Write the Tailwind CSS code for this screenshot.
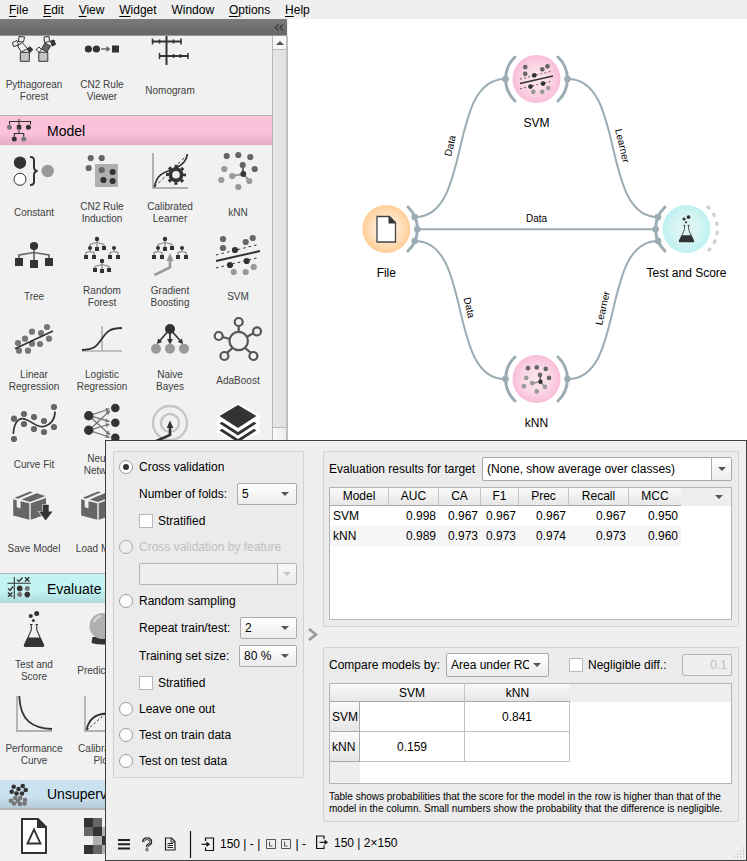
<!DOCTYPE html>
<html lang="en">
<head>
<meta charset="utf-8">
<title>Workflow editor</title>
<script src="https://cdn.jsdelivr.net/npm/@tailwindcss/browser@4"></script>
</head>
<body class="relative w-[747px] h-[861px] overflow-hidden flex flex-col bg-[#efefef] font-['Liberation_Sans',Arial,sans-serif] text-[12px] leading-[14px] text-black">

<!-- shared icon shapes -->
<svg class="hidden">
  <defs>
    <g id="svm">
      <g fill="#666"><circle cx="223" cy="239" r="3.1"/><circle cx="223" cy="248" r="3.1"/><circle cx="245.7" cy="242" r="3.1"/><circle cx="252.7" cy="238" r="3.1"/></g>
      <g fill="#999"><circle cx="233.7" cy="272" r="3.1"/><circle cx="245.7" cy="272" r="3.1"/><circle cx="253.7" cy="267" r="3.1"/></g>
      <g stroke="#333" fill="none"><path d="M216 261L260 251" stroke-width="2"/><path d="M216 255L259 244.3M216 268L259 257.5" stroke-width="1" stroke-dasharray="2.6 3"/></g>
      <g fill="#333"><circle cx="235" cy="250" r="3.1"/><circle cx="230" cy="265" r="3.1"/><circle cx="246.7" cy="261" r="3.1"/></g>
    </g>
    <g id="knn">
      <path d="M243.3 174L242.7 165" stroke="#666" stroke-width="2"/><path d="M243.3 174L232.3 176M243.3 174L249.3 181" stroke="#999" stroke-width="2"/>
      <g fill="#666"><circle cx="226.7" cy="156" r="3.1"/><circle cx="238.3" cy="155" r="3.1"/><circle cx="250.3" cy="157" r="3.1"/><circle cx="254.7" cy="169" r="3.1"/><circle cx="242.7" cy="165" r="3.1"/></g>
      <g fill="#999"><circle cx="224.3" cy="169" r="3.1"/><circle cx="221.3" cy="180" r="3.1"/><circle cx="232.3" cy="176" r="3.1"/><circle cx="249.3" cy="181" r="3.1"/><circle cx="238.3" cy="187" r="3.1"/></g>
      <circle cx="243.3" cy="174" r="2.9" fill="#333"/>
    </g>
    <g id="flask">
      <g fill="#333"><circle cx="30.7" cy="616" r="2.1"/><circle cx="36.7" cy="613.4" r="2.5"/><circle cx="33.4" cy="620.4" r="1.5"/>
      <path d="M27.5 637.5H40.500L44 644.500Q45 647 42 647H26Q23 647 24 644.500Z"/></g>
      <path d="M31.3 624.500V630L25 644.500M36.800 624.500V630L43 644.500" fill="none" stroke="#333" stroke-width="1.1"/>
      <path d="M30 624.500H32.500M35.500 624.500H38" stroke="#333" stroke-width="1.200"/>
    </g>
    <g id="forest">
      <path d="M97 240V247M90 247V244.500L97 242.500L104 244.500V247M90 249V251.500M86 255V252.500L90 251.500L94 252.500V255M114 249V251.500M110 255V252.500L114 251.500L118 252.500V255" fill="none" stroke="#888" stroke-width="1.200"/>
      <g fill="#333"><circle cx="97" cy="239" r="2.200"/><circle cx="90" cy="248" r="2"/><circle cx="114" cy="248" r="2"/><path d="M95 247h4v4h-4zM102 246h4v4h-4zM84 255h4v4h-4zM92 255h4v4h-4zM108 255h4v4h-4zM116 255h4v4h-4z"/></g>
    </g>
    <g id="box">
      <path d="M13.200 499.300L16.700 500.200V507L20.500 508.500V501.200L29.300 503.300V519.800L13.200 515.500ZM30.700 503.300L46 498V514.500L30.700 519.800Z" fill="#666"/>
      <path d="M14.500 497.800L30 491.500L33 492.200L18 498.700ZM21.500 499.600L36.500 493.200L45.500 496L30 502Z" fill="#666"/>
      <path d="M22 498.300L36 492.700" stroke="#f1f1f1" stroke-width=".8"/>
    </g>
  </defs>
</svg>

<!-- menu bar -->
<nav class="h-[19px] shrink-0 flex items-center gap-[14.8px] pl-[9px]">
  <span><u class="underline-offset-2">F</u>ile</span><span><u class="underline-offset-2">E</u>dit</span><span><u class="underline-offset-2">V</u>iew</span><span><u class="underline-offset-2">W</u>idget</span><span>Window</span><span><u class="underline-offset-2">O</u>ptions</span><span><u class="underline-offset-2">H</u>elp</span>
</nav>

<div class="flex h-[842px]">
  <!-- toolbox -->
  <aside class="w-[288px] shrink-0 flex flex-col">
    <div class="h-[17px] w-[287px] bg-linear-to-b from-[#7b7b7b] to-[#666] border-b border-[#999] flex justify-end items-center pr-[3px]">
      <svg class="w-[10px] h-[7px]" viewBox="0 0 10 7" fill="none" stroke="#3a3a3a" stroke-width="1.100"><path d="M4.500 .5L1.300 3.500L4.500 6.500M9 .5L5.800 3.500L9 6.500"/></svg>
    </div>
    <div class="flex flex-1 min-h-0">
      <div class="w-[272px] bg-[#f1f1f1] overflow-hidden text-[10px] leading-[12px] text-[#404040] text-center">
        <div class="grid grid-cols-4 h-[79px] content-start">
          <div><svg class="w-[68px] h-[39px]" viewBox="0 36 68 39">
            <g stroke="#333" stroke-width="1" fill="#f1f1f1"><path d="M20.300 52.300h9v9h-9z" fill="#c4c4c4"/><path d="M17.500 46L22 42.500L27.500 48.500L21.500 52Z"/><path d="M12.500 42.500L17 40.500L18.500 45L13.500 46.500ZM19 36.500L24.500 37L23.500 42L18.500 41.500Z"/><path d="M27 49L30 46.800L32.800 49.500L30 52.500Z" fill="#333"/>
            <path d="M38.800 52.300h9v9h-9z" fill="#c4c4c4"/><path d="M41.500 49L45 43L50.500 46L47 52Z" fill="#666"/><path d="M36 49.500L39 47L41.500 49.500L39 52.500Z"/><path d="M44 37L49 36.500L49.500 41.500L44.500 42.500Z"/><path d="M50.500 41L54 40L55.500 44.500L52 46Z" fill="#333"/></g></svg>
            <p class="h-[32px] flex items-center justify-center">Pythagorean<br>Forest</p></div>
          <div><svg class="w-[68px] h-[39px]" viewBox="68 36 68 39"><g fill="#333"><circle cx="88.400" cy="49" r="3.600"/><circle cx="96.400" cy="49" r="3.600"/><path d="M112 45.500h7v7h-7z"/></g><path d="M101 49H107.500" stroke="#666" stroke-width="1.500"/><path d="M106.500 46L110.500 49L106.500 52Z" fill="#666"/></svg>
            <p class="h-[32px] flex items-center justify-center">CN2 Rule<br>Viewer</p></div>
          <div><svg class="w-[68px] h-[39px]" viewBox="136 36 68 39"><path d="M166.500 36V65M152 41.500H181.500M159 56H188.500" stroke="#333" stroke-width="2"/><path d="M152.500 38.500v6M159.500 39.500v4M173.500 39.500v4M181 38.500v6M159.500 53v6M173.500 54v4M180.500 54v4M188 53v6" stroke="#333" stroke-width="1.500"/></svg>
            <p class="h-[32px] flex items-center justify-center">Nomogram</p></div>
        </div>

        <h2 class="h-[30px] flex items-center border-t border-[#b5b5b5] bg-linear-to-b from-[#fbc2da] from-60% to-[#e2abc2] text-[14px] text-black">
          <svg class="w-[47px] h-[29px]" viewBox="0 116 47 29"><path d="M9.500 124.500V121.500H30.500V124.500M19 119V125M19 130V133.500M14.300 136.500V133.500H23.700V136.500" fill="none" stroke="#333" stroke-width="1.100"/><g fill="#333"><path d="M16.800 125h4.500v4.500h-4.500z"/><circle cx="28.400" cy="127.300" r="2.500"/><circle cx="14.300" cy="139" r="2.500"/></g><g fill="#777"><circle cx="9.500" cy="127.300" r="2.500"/><circle cx="23.700" cy="139" r="2.500"/></g></svg>
          <span>Model</span></h2>
        <div class="grid grid-cols-4 auto-rows-[84px] pb-[8px]">
          <div><svg class="w-[68px] h-[52px]" viewBox="0 145 68 52"><circle cx="20" cy="162.700" r="6.200" fill="#333"/><circle cx="20" cy="179.300" r="6" fill="#fff" stroke="#333"/><path d="M30 157Q34.500 157 34 161V167Q34 170.500 37.500 171Q34 171.500 34 175V181Q34.500 185 30 185" fill="none" stroke="#333" stroke-width="2"/><circle cx="47.700" cy="171" r="6.200" fill="#999"/></svg>
            <p class="h-[32px] flex items-center justify-center">Constant</p></div>
          <div><svg class="w-[68px] h-[52px]" viewBox="68 145 68 52"><path d="M95 164h23v23h-23z" fill="#b0b0b0"/><g fill="#666"><circle cx="90.700" cy="158" r="3.100"/><circle cx="101.700" cy="158" r="3.100"/><circle cx="88.700" cy="168" r="3.100"/><circle cx="101.700" cy="170" r="3.100"/></g><g fill="#333"><circle cx="112.700" cy="172" r="3.100"/><circle cx="103.400" cy="180" r="3.100"/><circle cx="112.700" cy="181" r="3.100"/></g></svg>
            <p class="h-[32px] flex items-center justify-center">CN2 Rule<br>Induction</p></div>
          <div><svg class="w-[68px] h-[52px]" viewBox="136 145 68 52"><path d="M153 153V188H188" fill="none" stroke="#b0b0b0" stroke-width="2"/><path d="M154.500 187L186 156" stroke="#333" stroke-dasharray="3 2.500"/><path d="M154.500 187C157 172 167 172 174 169C183 165 187 159 187.300 154" fill="none" stroke="#333" stroke-width="1.700"/><circle cx="176" cy="174.700" r="5.600" fill="#f1f1f1" stroke="#333" stroke-width="3.600"/><circle cx="176" cy="174.700" r="8.500" fill="none" stroke="#333" stroke-width="3" stroke-dasharray="3 3.675" stroke-dashoffset="1.500"/></svg>
            <p class="h-[32px] flex items-center justify-center">Calibrated<br>Learner</p></div>
          <div><svg class="w-[68px] h-[52px]" viewBox="204 145 68 52"><use href="#knn"/></svg>
            <p class="h-[32px] flex items-center justify-center">kNN</p></div>

          <div><svg class="w-[68px] h-[52px]" viewBox="0 229 68 52"><path d="M34 248V262M19 259V255L34 252.500L49 255V259" fill="none" stroke="#666" stroke-width="1.700"/><g fill="#333"><circle cx="34" cy="246" r="4.100"/><path d="M15 258h8v8h-8zM30 260h8v8h-8zM45 258h8v8h-8z"/></g></svg>
            <p class="h-[32px] flex items-center justify-center">Tree</p></div>
          <div><svg class="w-[68px] h-[52px]" viewBox="68 229 68 52"><use href="#forest"/><path d="M102 262V270M95 269V266.500L102 264.500L109 266.500V269" fill="none" stroke="#888" stroke-width="1.200"/><g fill="#333"><circle cx="102" cy="261" r="2.200"/><path d="M93 268h4v4h-4zM100 269h4v4h-4zM107 268h4v4h-4z"/></g></svg>
            <p class="h-[32px] flex items-center justify-center">Random<br>Forest</p></div>
          <div><svg class="w-[68px] h-[52px]" viewBox="136 229 68 52"><use href="#forest" x="68"/><path d="M154.500 275L170 267.500V258" fill="none" stroke="#999" stroke-width="2.600"/><path d="M166.500 261L170 253L173.500 261Z" fill="#999"/></svg>
            <p class="h-[32px] flex items-center justify-center">Gradient<br>Boosting</p></div>
          <div><svg class="w-[68px] h-[52px]" viewBox="204 229 68 52"><use href="#svm"/></svg>
            <p class="h-[32px] flex items-center justify-center">SVM</p></div>

          <div><svg class="w-[68px] h-[52px]" viewBox="0 313 68 52"><g fill="#777"><circle cx="19" cy="350.700" r="3.100"/><circle cx="18" cy="343" r="3.100"/><circle cx="25" cy="338.700" r="3.100"/><circle cx="32" cy="331.700" r="3.100"/><circle cx="41" cy="333" r="3.100"/><circle cx="47" cy="327" r="3.100"/><circle cx="49" cy="338.700" r="3.100"/><circle cx="40" cy="344" r="3.100"/><circle cx="32" cy="343.700" r="3.100"/><circle cx="28" cy="350.700" r="3.100"/></g><path d="M15 348.700L53 331" stroke="#333" stroke-width="1.700"/></svg>
            <p class="h-[32px] flex items-center justify-center">Linear<br>Regression</p></div>
          <div><svg class="w-[68px] h-[52px]" viewBox="68 313 68 52"><path d="M102 326V351M82 351H122" stroke="#b0b0b0" stroke-width="1.700"/><path d="M82 350C96 350 98 344 102 338.500S108 328 122 328" fill="none" stroke="#333" stroke-width="1.800"/></svg>
            <p class="h-[32px] flex items-center justify-center">Logistic<br>Regression</p></div>
          <div><svg class="w-[68px] h-[52px]" viewBox="136 313 68 52"><path d="M170 329L159.500 341M170 329V340M170 329L180.500 341" stroke="#333" stroke-width="1.700"/><circle cx="170" cy="329" r="5" fill="#333"/><path d="M157 344L158 338.500L162.300 342ZM167 339h6L170 344.500ZM183 344L182 338.500L177.700 342Z" fill="#333"/><g fill="#999"><circle cx="156" cy="348.800" r="5"/><circle cx="170" cy="348.800" r="5"/><circle cx="184" cy="348.800" r="5"/></g></svg>
            <p class="h-[32px] flex items-center justify-center">Naive<br>Bayes</p></div>
          <div><svg class="w-[68px] h-[52px]" viewBox="204 313 68 52"><g fill="none" stroke="#555" stroke-width="2.200"><circle cx="238.700" cy="341" r="9.200"/><circle cx="238.700" cy="322" r="4"/><circle cx="257" cy="331.400" r="4"/><circle cx="253.400" cy="356" r="4"/><circle cx="224.400" cy="356" r="4"/><circle cx="218.700" cy="336" r="4"/><path d="M238.700 326V332M253.500 333.200L247 336.700M251 352.800L245 348M227 352.800L232.500 348M222.500 337L230 339"/></g></svg>
            <p class="h-[32px] flex items-center justify-center">AdaBoost</p></div>

          <div><svg class="w-[68px] h-[52px]" viewBox="0 397 68 52"><g fill="#666"><circle cx="14" cy="418.700" r="3.100"/><circle cx="24" cy="414" r="3.100"/><circle cx="24" cy="424" r="3.100"/><circle cx="34" cy="417" r="3.100"/><circle cx="34" cy="429" r="3.100"/><circle cx="44" cy="421" r="3.100"/><circle cx="44" cy="432" r="3.100"/><circle cx="54" cy="407" r="3.100"/><circle cx="54" cy="427" r="3.100"/><circle cx="14" cy="439" r="3.100"/></g><path d="M13.300 434C14 420 20 417 26 419.500C33 422 37 428 44 426.500C52 424 55 419 55 411.500" fill="none" stroke="#333" stroke-width="1.700"/></svg>
            <p class="h-[32px] flex items-center justify-center">Curve Fit</p></div>
          <div><svg class="w-[68px] h-[52px]" viewBox="68 397 68 52"><path d="M89 415.700L108 409.500M89 415.700L108 421M89 415.700L109 434M89 430.300L109 411.500M89 430.300L108 424.500M89 430.300L109 437" stroke="#777" stroke-width="1.300"/><path d="M110 408.500L105.500 408L106.500 412ZM110.500 421.700L106 418.500L105.500 422.500ZM110.500 435.500L108.500 430.500L105.500 433.500ZM110.500 410L105.500 412L108.500 415ZM110 424L105.500 423.300L106.500 427.200ZM110.500 437.500L106 434.300L105.500 438Z" fill="#777"/><g fill="#333"><circle cx="88.700" cy="415.700" r="4.700"/><circle cx="88.700" cy="430.300" r="4.700"/><circle cx="115.300" cy="408" r="4.300"/><circle cx="115.300" cy="422.700" r="4.300"/><circle cx="115.300" cy="437.700" r="4.300"/></g></svg>
            <p class="h-[32px] flex items-center justify-center">Neural<br>Network</p></div>
          <div><svg class="w-[68px] h-[52px]" viewBox="136 397 68 52"><g fill="none" stroke="#c6c6c6" stroke-width="2.400"><circle cx="170" cy="423" r="17"/><circle cx="170" cy="423" r="9"/></g><path d="M154 442L170 435V426" fill="none" stroke="#333" stroke-width="2.600"/><path d="M166.700 428L170 420.500L173.300 428Z" fill="#333"/></svg>
            <p class="h-[32px] flex items-center justify-center">Stochastic</p></div>
          <div><svg class="w-[68px] h-[52px]" viewBox="204 397 68 52"><path d="M238 402.500L261 416.500L258 420L261 423L258 427L261 431L238 445L215.500 431L218.500 427L215.500 423L218.500 420L215.500 416.500Z" fill="#fff"/><g fill="#333"><path d="M238 405L256.500 416L238 428L219.500 416Z"/><path d="M219.500 423.500L222 421.700L238 432L254 421.700L256.500 423.500L238 435.500Z"/><path d="M219.500 430.500L222 428.700L238 439L254 428.700L256.500 430.500L238 442.500Z"/></g></svg>
            <p class="h-[32px] flex items-center justify-center">Stacking</p></div>

          <div><svg class="w-[68px] h-[52px]" viewBox="0 481 68 52"><use href="#box"/><path d="M42.700 504.800H48.700V511.500H52.500L45.700 520.500L39 511.500H42.700Z" fill="#333" stroke="#f1f1f1" stroke-width="1.200" paint-order="stroke"/></svg>
            <p class="h-[32px] flex items-center justify-center">Save Model</p></div>
          <div><svg class="w-[68px] h-[52px]" viewBox="68 481 68 52"><use href="#box" x="68"/></svg>
            <p class="h-[32px] flex items-center justify-center">Load Model</p></div>
        </div>

        <h2 class="h-[30px] flex items-center border-t border-[#b5b5b5] bg-linear-to-b from-[#c3f3f3] from-60% to-[#aedada] text-[14px] text-black">
          <svg class="w-[47px] h-[29px]" viewBox="0 574 47 29"><path d="M14.300 577V599M7.500 583.300H30.700" stroke="#333" stroke-width="1.100"/><path d="M17 579.500L19 581.500L22.500 577.500M25 577.300L29.300 581.600M29.300 577.300L25 581.600M8 588.500L10 590.500L13 586.500M8 592.500L12.300 596.800M12.300 592.500L8 596.800" fill="none" stroke="#333" stroke-width="1.400"/><g fill="#333"><circle cx="19.700" cy="588.400" r="2.800"/><circle cx="27.300" cy="594.600" r="2.800"/></g><g fill="#777"><circle cx="27.300" cy="588.400" r="2.500"/><circle cx="19.700" cy="594.600" r="2.500"/></g></svg>
          <span>Evaluate</span></h2>
        <div class="grid grid-cols-4 auto-rows-[84px] pb-[9px]">
          <div><svg class="w-[68px] h-[52px]" viewBox="0 603 68 52"><use href="#flask"/></svg>
            <p class="h-[32px] flex items-center justify-center">Test and<br>Score</p></div>
          <div><svg class="w-[68px] h-[52px]" viewBox="68 603 68 52"><path d="M92.500 637H112.500L113.500 643Q103 646 91.500 643Z" fill="#333"/><circle cx="102.500" cy="626" r="13" fill="#b0b0b0"/><path d="M94 622Q96 617 101 616" fill="none" stroke="#d8d8d8" stroke-width="2"/></svg>
            <p class="h-[32px] flex items-center justify-center">Predictions</p></div>
          <div class="col-start-1"><svg class="w-[68px] h-[52px]" viewBox="0 687 68 52"><path d="M17 696V731H52" fill="none" stroke="#b0b0b0" stroke-width="1.800"/><path d="M19.300 696C20 721 33 728.500 52 729" fill="none" stroke="#333" stroke-width="1.800"/></svg>
            <p class="h-[32px] flex items-center justify-center">Performance<br>Curve</p></div>
          <div><svg class="w-[68px] h-[52px]" viewBox="68 687 68 52"><path d="M85 696V731H120" fill="none" stroke="#b0b0b0" stroke-width="1.800"/><path d="M86.500 730C89 718 96 714 106 713.500" fill="none" stroke="#333" stroke-width="1.800"/><path d="M87 730L105 714" stroke="#333" stroke-dasharray="2.500 2"/></svg>
            <p class="h-[32px] flex items-center justify-center">Calibration<br>Plot</p></div>
        </div>

        <h2 class="h-[30px] flex items-center border-b-2 border-[#b5b5b5] bg-linear-to-b from-[#cae1ef] from-60% to-[#b5cad6] text-[14px] text-black">
          <svg class="w-[47px] h-[28px]" viewBox="0 780 47 28"><g fill="#333"><circle cx="13.700" cy="786.700" r="2.300"/><circle cx="22.700" cy="786" r="2.300"/><circle cx="18.500" cy="789" r="2.300"/><circle cx="11.700" cy="791.700" r="2.300"/><circle cx="25.700" cy="790" r="2.300"/><circle cx="16.500" cy="793.500" r="2.300"/><circle cx="22" cy="793.500" r="2.300"/></g><g fill="#777"><circle cx="11" cy="800.700" r="2.300"/><circle cx="15.300" cy="798" r="2.300"/><circle cx="20.200" cy="798" r="2.300"/><circle cx="14" cy="803.500" r="2.300"/><circle cx="18" cy="801" r="2.300"/><circle cx="25" cy="800" r="2.300"/><circle cx="20" cy="804" r="2.300"/><circle cx="24.500" cy="803.500" r="2.300"/></g></svg>
          <span>Unsupervised</span></h2>
        <div class="grid grid-cols-4">
          <svg class="w-[68px] h-[51px]" viewBox="0 810 68 51"><path d="M22 819H38L46 827V853H22Z" fill="#fff" stroke="#333" stroke-width="2"/><path d="M37 818.500L47 828H37Z" fill="#333"/><path d="M27.500 843.500L34 829.500L40.500 843.500Z" fill="none" stroke="#333" stroke-width="1.800"/></svg>
          <svg class="w-[68px] h-[51px]" viewBox="68 810 68 51"><path d="M84 818h9v9h-9zM93 827h9v9h-9zM102 836h9v9h-9zM84 845h9v9h-9z" fill="#333"/><path d="M93 818h9v9h-9zM84 827h9v9h-9zM93 845h9v9h-9z" fill="#666"/><path d="M102 827h9v9h-9zM93 836h9v9h-9zM102 845h9v9h-9z" fill="#b0b0b0"/></svg>
        </div>
      </div>
      <!-- toolbox scroll bar -->
      <div class="w-[16px] flex flex-col border-l border-[#b4b8ba] border-r-2 border-r-[#b9c0c4] bg-[#e4e4e4]">
        <div class="h-[14px] bg-[#f8f8f8] border-b border-[#bbb] flex items-center justify-center"><svg class="w-[8px] h-[4px]" viewBox="0 0 8 4"><path d="M0 4L4 0L8 4Z" fill="#555"/></svg></div>
        <div class="h-[377px]"></div>
        <div class="flex-1 border-t border-[#bbb] bg-linear-to-r from-[#f9f9f9] to-[#ececec]"></div>
      </div>
    </div>
  </aside>

  <!-- workflow canvas -->
  <main class="flex-1 bg-white">
    <svg class="w-[459px] h-[842px] font-['Liberation_Sans',Arial,sans-serif]" viewBox="288 19 459 842">
      <defs>
        <radialGradient id="gp"><stop offset="0" stop-color="#fbe6ee"/><stop offset=".5" stop-color="#fbdbe8"/><stop offset="1" stop-color="#f9bdd8"/></radialGradient>
        <radialGradient id="go"><stop offset="0" stop-color="#fff0de"/><stop offset=".5" stop-color="#ffe6ca"/><stop offset="1" stop-color="#ffce96"/></radialGradient>
        <radialGradient id="gt"><stop offset="0" stop-color="#e2f5f4"/><stop offset=".5" stop-color="#d8f4f3"/><stop offset="1" stop-color="#bff1f1"/></radialGradient>
      </defs>
      <g fill="none" stroke="#9cacb4" stroke-width="2">
        <path d="M415 217C473 217 447 79 505 79M415 241C473 241 447 379 505 379M568 79C626 79 600 217 658 217M568 379C626 379 600 241 658 241"/>
        <path d="M417 229.300H656"/>
      </g>
      <g fill="none" stroke="#9cacb4" stroke-width="3" stroke-linecap="round">
        <path d="M515 57A30.500 30.500 0 0 0 515 101M558 57A30.500 30.500 0 0 1 558 101M515 357A30.500 30.500 0 0 0 515 401M558 357A30.500 30.500 0 0 1 558 401M408 207A30.500 30.500 0 0 1 408 251M665 207A30.500 30.500 0 0 0 665 251"/>
        <path d="M708 207A30.500 30.500 0 0 1 708 251" stroke="#c8d0d4" stroke-width="3.200" stroke-dasharray="1.500 7.700"/>
      </g>
      <g fill="#9cacb4"><circle cx="505.500" cy="79" r="3.300"/><circle cx="567.500" cy="79" r="3.300"/><circle cx="505.500" cy="379" r="3.300"/><circle cx="567.500" cy="379" r="3.300"/><circle cx="414.700" cy="217" r="3.300"/><circle cx="417.300" cy="229.300" r="3.300"/><circle cx="414.700" cy="241" r="3.300"/><circle cx="658" cy="217" r="3.300"/><circle cx="655.600" cy="229.300" r="3.300"/><circle cx="658" cy="241" r="3.300"/></g>
      <circle cx="536.500" cy="79" r="24" fill="url(#gp)"/><circle cx="536.500" cy="379" r="24" fill="url(#gp)"/><circle cx="386.300" cy="229" r="24" fill="url(#go)"/><circle cx="686.500" cy="229" r="24" fill="url(#gt)"/>
      <use href="#svm" transform="translate(358 -112.200) scale(.75)"/>
      <use href="#knn" transform="translate(358 251.200) scale(.75)"/>
      <use href="#flask" transform="translate(661 -243) scale(.75)"/>
      <path d="M377 216.500H389.500L395.500 222.500V242H377Z" fill="#fff" stroke="#444" stroke-width="1.300"/><path d="M388.500 216L396 223.500H388.500Z" fill="#333"/>
      <g font-size="12" text-anchor="middle"><text x="536.500" y="127">SVM</text><text x="536.500" y="427">kNN</text><text x="386.300" y="277">File</text><text x="686.500" y="277">Test and Score</text></g>
      <g font-size="10" text-anchor="middle"><text x="536.500" y="222">Data</text><text transform="translate(453.500 146.500) rotate(-77)">Data</text><text transform="translate(466 308.500) rotate(77)">Data</text><text transform="translate(619 146.500) rotate(77)">Learner</text><text transform="translate(606 309) rotate(-77)">Learner</text></g>
    </svg>
  </main>
</div>

<!-- Test and Score window -->
<section class="absolute left-[105px] top-[440px] w-[642px] h-[421px] bg-[#efefef] border border-[#404040] flex flex-col">
  <div class="flex h-[382px] pt-[10px] pl-[7px]">
    <div class="w-[191px] h-[327px] border border-[#d2d2d2] rounded-[2px] bg-[#ebebeb] pt-[2px] pl-[5px] pr-[6px]">
      <div class="h-[26px] flex items-center gap-[6px]"><i class="size-[14px] rounded-full border border-[#999] bg-white flex items-center justify-center"><b class="size-[6px] rounded-full bg-[#333]"></b></i>Cross validation</div>
      <div class="h-[28px] flex items-center justify-between pl-[20px]">Number of folds:
        <div class="w-[60px] h-[22px] border border-[#aaa] rounded-[2px] bg-linear-to-b from-white to-[#ececec] flex items-center justify-between pl-[4px] pr-[7px]">5<svg class="w-[8px] h-[4px]" viewBox="0 0 8 4"><path d="M0 0H8L4 4Z" fill="#555"/></svg></div></div>
      <div class="h-[26px] flex items-center gap-[5px] pl-[20px]"><i class="size-[14px] border border-[#b8b8b8] bg-white"></i>Stratified</div>
      <div class="h-[26px] flex items-center gap-[6px] text-[#bebebe]"><i class="size-[14px] rounded-full border border-[#aaa] bg-[#efefef]"></i>Cross validation by feature</div>
      <div class="h-[28px] flex items-center pl-[20px]">
        <div class="w-[158px] h-[22px] border border-[#b4b4b4] rounded-[2px] bg-[#efefef] flex justify-end"><div class="w-[19px] border-l border-[#b4b4b4] bg-linear-to-b from-[#f8f8f8] to-[#ececec] flex items-center justify-center"><svg class="w-[8px] h-[4px]" viewBox="0 0 8 4"><path d="M0 0H8L4 4Z" fill="#c4c4c4"/></svg></div></div></div>
      <div class="h-[26px] flex items-center gap-[6px]"><i class="size-[14px] rounded-full border border-[#999] bg-white"></i>Random sampling</div>
      <div class="h-[28px] flex items-center justify-between pl-[20px]">Repeat train/test:
        <div class="w-[57px] h-[22px] border border-[#aaa] rounded-[2px] bg-linear-to-b from-white to-[#ececec] flex items-center justify-between pl-[4px] pr-[7px]">2<svg class="w-[8px] h-[4px]" viewBox="0 0 8 4"><path d="M0 0H8L4 4Z" fill="#555"/></svg></div></div>
      <div class="h-[28px] flex items-center justify-between pl-[20px]">Training set size:
        <div class="w-[58px] h-[22px] border border-[#aaa] rounded-[2px] bg-linear-to-b from-white to-[#ececec] flex items-center justify-between pl-[4px] pr-[7px]">80 %<svg class="w-[8px] h-[4px]" viewBox="0 0 8 4"><path d="M0 0H8L4 4Z" fill="#555"/></svg></div></div>
      <div class="h-[26px] flex items-center gap-[5px] pl-[20px]"><i class="size-[14px] border border-[#b8b8b8] bg-white"></i>Stratified</div>
      <div class="h-[26px] flex items-center gap-[6px]"><i class="size-[14px] rounded-full border border-[#999] bg-white"></i>Leave one out</div>
      <div class="h-[26px] flex items-center gap-[6px]"><i class="size-[14px] rounded-full border border-[#999] bg-white"></i>Test on train data</div>
      <div class="h-[26px] flex items-center gap-[6px]"><i class="size-[14px] rounded-full border border-[#999] bg-white"></i>Test on test data</div>
    </div>

    <div class="w-[19px] pt-[177px] pl-[4px]"><svg class="w-[10px] h-[13px]" viewBox="0 0 10 13"><path d="M1 1L8 6.500L1 12" fill="none" stroke="#999" stroke-width="2.600"/></svg></div>

    <div class="w-[416px] flex flex-col gap-[20px]">
      <div class="h-[176px] border border-[#d2d2d2] rounded-[2px] bg-[#ebebeb] px-[5px] pt-[5px]">
        <div class="flex items-center justify-between h-[24px] pr-px">Evaluation results for target
          <div class="w-[250px] h-[24px] border border-[#aaa] rounded-[2px] bg-white flex items-center justify-between pl-[4px]">(None, show average over classes)<div class="w-[20px] h-full border-l border-[#aaa] bg-linear-to-b from-white to-[#ececec] flex items-center justify-center"><svg class="w-[8px] h-[4px]" viewBox="0 0 8 4"><path d="M0 0H8L4 4Z" fill="#555"/></svg></div></div></div>
        <div class="mt-[6px] w-[403px] h-[133px] border border-[#b4b4b4] bg-white">
          <div class="h-[18px] flex bg-[#eee]">
            <div class="grid grid-cols-[59px_50px_42px_38px_50px_60px_52px] text-center leading-[17px] border-b border-[#aaa] bg-linear-to-b from-[#fafafa] to-[#e6e6e6] divide-x divide-[#c6c6c6]">
              <span>Model</span><span>AUC</span><span>CA</span><span>F1</span><span>Prec</span><span>Recall</span><span>MCC</span></div>
            <div class="flex-1 flex items-center justify-end pr-[8px]"><svg class="w-[8px] h-[4px]" viewBox="0 0 8 4"><path d="M0 0H8L4 4Z" fill="#555"/></svg></div>
          </div>
          <div class="w-[351px] h-[20px] grid grid-cols-[59px_50px_42px_38px_50px_60px_52px] leading-[20px] text-right"><span class="text-left pl-[3px]">SVM</span><span class="pr-[3px]">0.998</span><span class="pr-[3px]">0.967</span><span class="pr-[3px]">0.967</span><span class="pr-[3px]">0.967</span><span class="pr-[3px]">0.967</span><span class="pr-[3px]">0.950</span></div>
          <div class="w-[351px] h-[20px] grid grid-cols-[59px_50px_42px_38px_50px_60px_52px] leading-[20px] text-right bg-[#f6f6f6]"><span class="text-left pl-[3px]">kNN</span><span class="pr-[3px]">0.989</span><span class="pr-[3px]">0.973</span><span class="pr-[3px]">0.973</span><span class="pr-[3px]">0.974</span><span class="pr-[3px]">0.973</span><span class="pr-[3px]">0.960</span></div>
        </div>
      </div>

      <div class="h-[175px] border border-[#d2d2d2] rounded-[2px] bg-[#ebebeb] px-[5px] pt-[5px]">
        <div class="flex items-center h-[24px]"><span class="w-[117px]">Compare models by:</span>
          <div class="w-[103px] h-[24px] border border-[#aaa] rounded-[2px] bg-linear-to-b from-white to-[#ececec] flex items-center justify-between pl-[4px] pr-[7px]"><span class="w-[78px] overflow-hidden whitespace-nowrap">Area under ROC</span><svg class="w-[8px] h-[4px] shrink-0" viewBox="0 0 8 4"><path d="M0 0H8L4 4Z" fill="#555"/></svg></div>
          <i class="ml-[20px] mr-[5px] size-[14px] border border-[#b8b8b8] bg-white"></i><span class="w-[94px]">Negligible diff.:</span>
          <div class="w-[50px] h-[22px] border border-[#b4b4b4] rounded-[2px] bg-[#efefef] text-[#bebebe] text-right pr-[4px] leading-[20px]">0.1</div>
        </div>
        <div class="mt-[6px] w-[403px] h-[101px] border border-[#b4b4b4] bg-white grid grid-cols-[30px_105px_105px_1fr] grid-rows-[18px_30px_30px_1fr] text-center">
          <span class="border-b border-[#aaa] bg-linear-to-b from-[#fafafa] to-[#e6e6e6]"></span><span class="border-b border-r border-[#aaa] border-r-[#c6c6c6] bg-linear-to-b from-[#fafafa] to-[#e6e6e6] leading-[18px]">SVM</span><span class="border-b border-[#aaa] bg-linear-to-b from-[#fafafa] to-[#e6e6e6] leading-[18px]">kNN</span><span class="bg-[#eee]"></span>
          <span class="border-b border-r border-[#aaa] bg-linear-to-b from-[#fafafa] to-[#e6e6e6] leading-[30px] text-left pl-[2px]">SVM</span><span class="border-b border-r border-[#c0c0c0]"></span><span class="border-b border-r border-[#c0c0c0] leading-[30px]">0.841</span><span></span>
          <span class="border-b border-r border-[#aaa] bg-linear-to-b from-[#fafafa] to-[#e6e6e6] leading-[30px] text-left pl-[2px]">kNN</span><span class="border-b border-r border-[#c0c0c0] leading-[30px]">0.159</span><span class="border-b border-r border-[#c0c0c0]"></span><span></span>
          <span class="bg-[#eee]"></span>
        </div>
        <p class="mt-[7px] text-[10px] leading-[12px] whitespace-nowrap">Table shows probabilities that the score for the model in the row is higher than that of the<br>model in the column. Small numbers show the probability that the difference is negligible.</p>
      </div>
    </div>
  </div>

  <!-- status bar -->
  <footer class="flex-1 flex items-center relative">
    <svg class="w-[114px] h-[37px]" viewBox="106 823 114 37"><path d="M118 840H130M118 844.300H130M118 848.600H130" stroke="#222" stroke-width="2"/>
      <path d="M143.500 842Q143.300 838.700 147 838.700T150.800 842Q150.800 843.800 148.500 844.800Q147 845.500 147 847.300" fill="none" stroke="#222" stroke-width="2.800"/><path d="M144 842Q143.500 838.700 147 838.700T150.500 842Q150.500 843.800 148.300 844.800Q147 845.500 147 847" fill="none" stroke="#efefef" stroke-width=".8"/><circle cx="147" cy="849.700" r="1.200" fill="#efefef" stroke="#222" stroke-width=".8"/>
      <path d="M165.500 838H171.500L175 841.500V850H165.500Z" fill="none" stroke="#222" stroke-width="1.200"/><path d="M171 838V842H175M167.500 843.500H173M167.500 845.500H173M167.500 847.500H173" fill="none" stroke="#222" stroke-width="1"/>
      <path d="M190.500 831V858" stroke="#111" stroke-width="1.200"/>
      <path d="M205.500 841V838H213.500V850.500H205.500V847.500" fill="none" stroke="#111" stroke-width="1.200"/><path d="M201.500 844.300H208" stroke="#111" stroke-width="1.200"/><path d="M206.500 841.500L210 844.300L206.500 847Z" fill="#111"/></svg>
    <span class="pt-[4px] w-[96px] flex items-center">150 | - |&nbsp;
      <svg class="ml-[2px] w-[25px] h-[10px]" viewBox="0 0 25 10"><path d="M.5 .5h9v9h-9zM15.500 .5h9v9h-9zM3.500 2.500V7H6.500M18.500 2.500V7H21.500" fill="none" stroke="#555" stroke-width="1"/></svg><span class="ml-[5px]">| -</span></span>
    <svg class="w-[12px] h-[14px]" viewBox="316 837 12 14"><path d="M324 841V838H316.600V850.500H324V847.500" fill="none" stroke="#111" stroke-width="1.200"/><path d="M319.500 844.300H326" stroke="#111" stroke-width="1.200"/><path d="M324.500 841.500L328 844.300L324.500 847Z" fill="#111"/></svg>
    <span class="ml-[6px] pt-[2px]">150 | 2×150</span>
    <svg class="absolute right-px bottom-px w-[12px] h-[12px]" viewBox="0 0 12 12"><path d="M10 1h1M7 4h1M10 4h1M4 7h1M7 7h1M10 7h1M1 10h1M4 10h1M7 10h1M10 10h1" stroke="#aaa"/></svg>
  </footer>
</section>
</body>
</html>
